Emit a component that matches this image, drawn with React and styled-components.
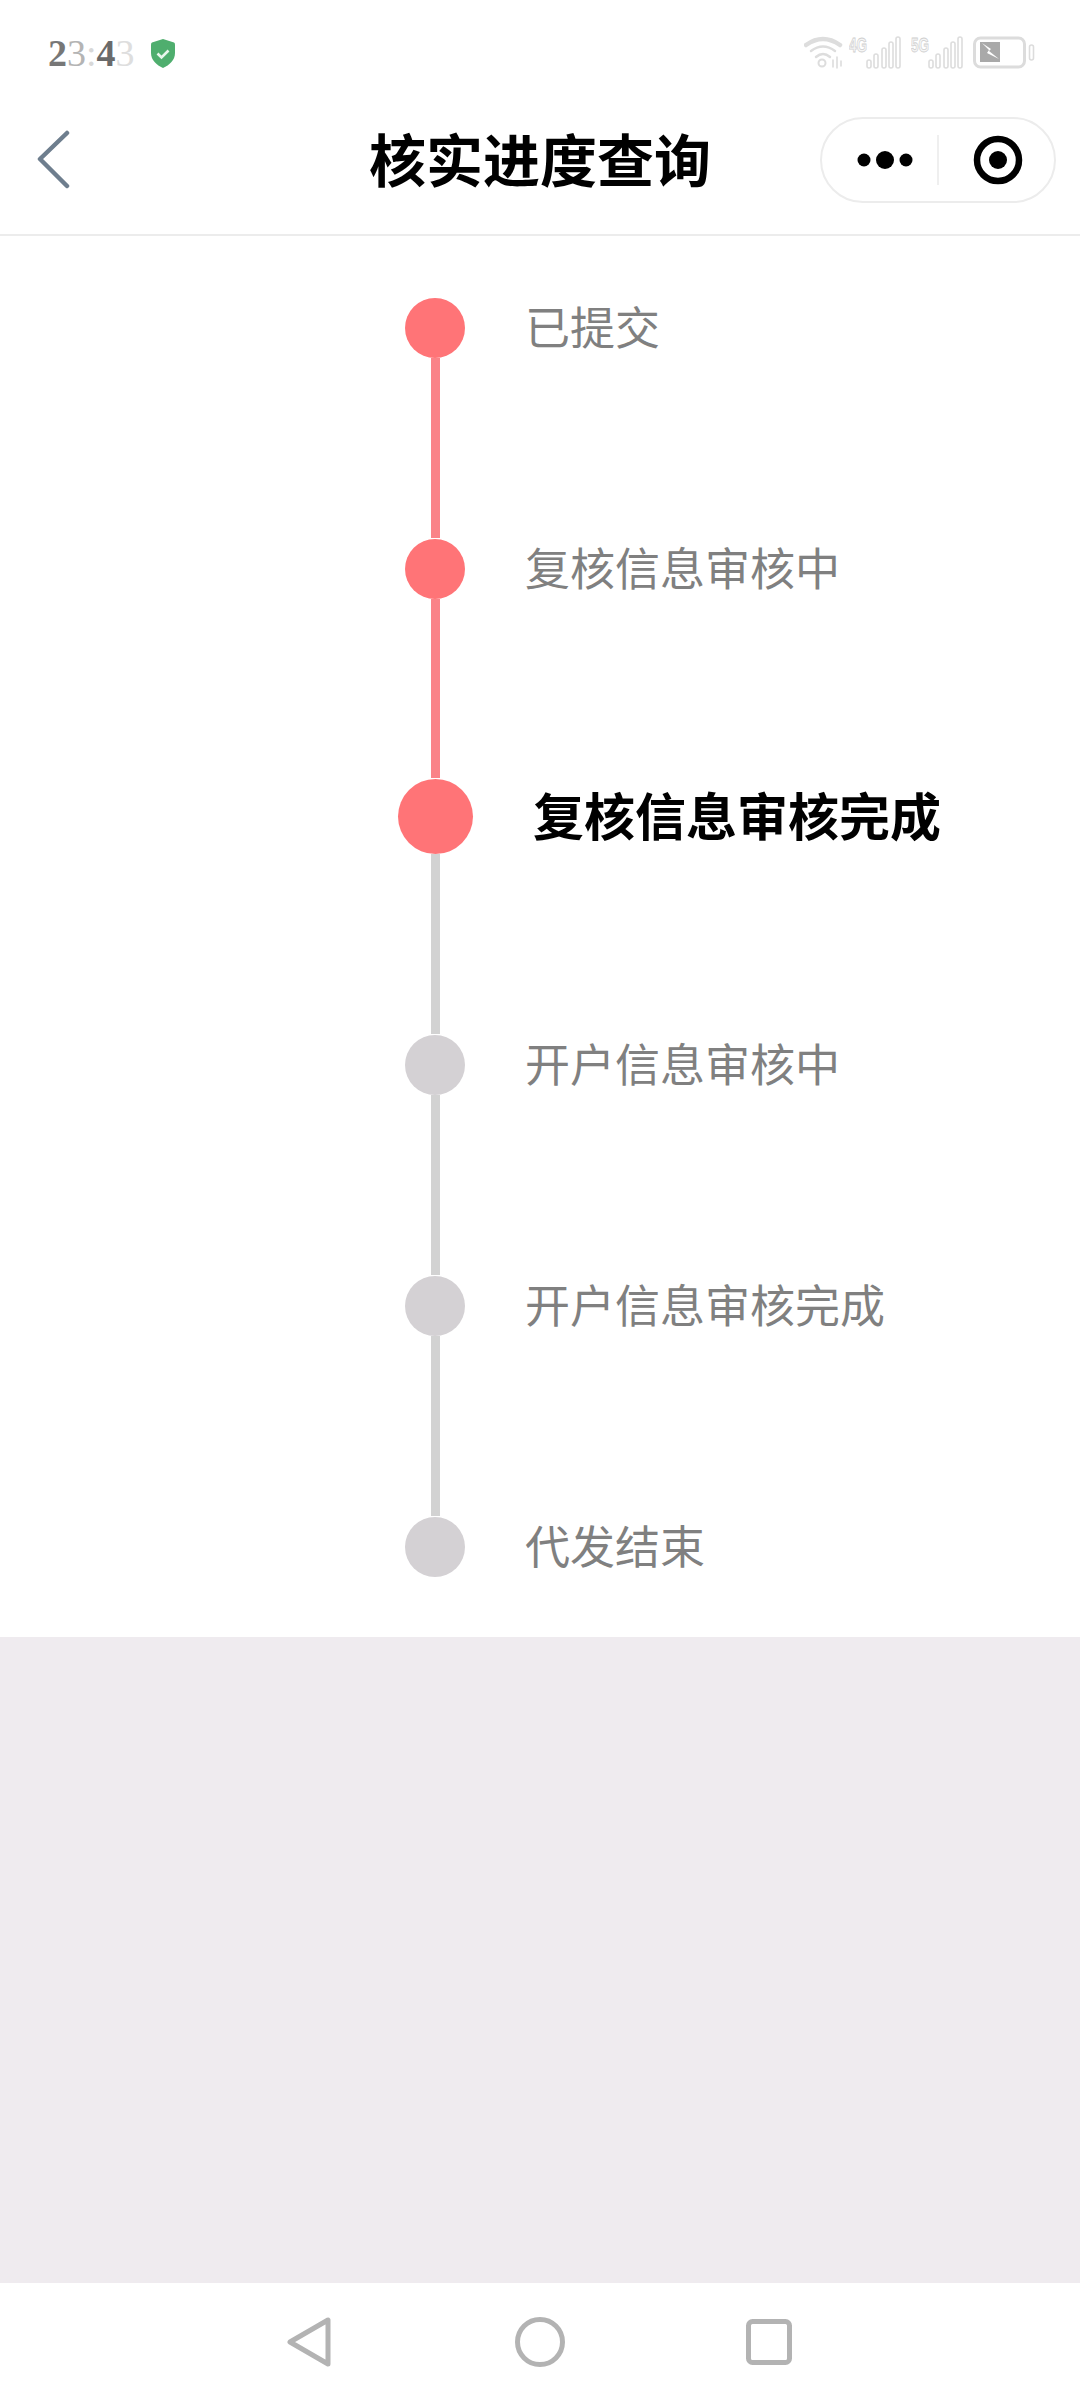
import React from 'react'
import styled, { createGlobalStyle } from 'styled-components'

const steps = [
	{ label: '已提交', state: 'done' },
	{ label: '复核信息审核中', state: 'done' },
	{ label: '复核信息审核完成', state: 'current' },
	{ label: '开户信息审核中', state: 'todo' },
	{ label: '开户信息审核完成', state: 'todo' },
	{ label: '代发结束', state: 'todo' },
]

// gaps between one dot and the next, top to bottom
const lineHeights = [181, 180, 181, 181, 181]

const timeChars = [
	['2', '#777777', 700],
	['3', '#b4b4b4', 400],
	[':', '#d8d8d8', 400],
	['4', '#6a6a6a', 700],
	['3', '#dedede', 400],
]

const signalBars = [
	[18, 24],
	[25, 18],
	[33, 12],
	[40, 6],
	[47, 1],
]

const SignalIcon = ({ name }) => (
	<SignalSvg width='62' height='42' viewBox='0 -8 62 42'>
		<text
			x='0'
			y='16'
			fontSize='20'
			fontWeight='700'
			fontFamily='Liberation Sans, sans-serif'
			fill='#f6f6f6'
			stroke='#cfcfcf'
			strokeWidth='0.8'
			textLength='18'
			lengthAdjust='spacingAndGlyphs'
		>
			{name}
		</text>
		<g fill='none' stroke='#dddddd' strokeWidth='1.6'>
			{signalBars.map(([x, top]) => (
				<rect key={x} x={x} y={top} width='4' height={32 - top} rx='2' />
			))}
		</g>
	</SignalSvg>
)

const App = () => {
	return (
		<>
			<GlobalStyle />
			<Page>
				<StatusBar>
					<StatusLeft>
						<Time>
							{timeChars.map(([char, color, weight], i) => (
								<TimeChar key={i} $color={color} $weight={weight}>
									{char}
								</TimeChar>
							))}
						</Time>
						<svg width='24' height='29' viewBox='0 0 24 29'>
							<path d='M12 0 L23 3.500 Q24 4 24 5.500 V14 C24 21 18.500 26 12 29 C5.500 26 0 21 0 14 V5.500 Q0 4 1 3.500 Z' fill='#4fae6e' />
							<path d='M6.500 14.500 L10.500 18.500 L17.500 11.500' fill='none' stroke='#e8f6ec' strokeWidth='2.600' />
						</svg>
					</StatusLeft>
					<StatusRight>
						<StatusIcon width='45' height='34' viewBox='0 0 45 34'>
							<g fill='none' stroke='#dddddd' strokeLinecap='round'>
								<path d='M2 9 Q19 -3 36 9' strokeWidth='4.500' />
								<path d='M7 15 Q19 6 31 15' strokeWidth='2.500' />
								<path d='M12 21 Q19 15 26 21' strokeWidth='2.500' />
								<circle cx='18' cy='27' r='3.500' strokeWidth='2' />
								<path d='M29 24 V31 M33 21 V32 M37 25 V30' strokeWidth='1.600' />
							</g>
						</StatusIcon>
						<SignalIcon name='4G' />
						<SignalIcon name='5G' />
						<StatusIcon width='62' height='34' viewBox='0 0 62 34'>
							<rect x='1.500' y='2' width='50' height='29' rx='6' fill='none' stroke='#dcdcdc' strokeWidth='3' />
							<rect x='7' y='6' width='20' height='20' fill='#a9a9a9' />
							<path d='M9 7 L18 13 L16 15 L26 23 L14 17 L16 14 Z' fill='#ffffff' />
							<rect x='56.500' y='9' width='4' height='15' rx='2' fill='none' stroke='#dcdcdc' strokeWidth='1.600' />
						</StatusIcon>
					</StatusRight>
				</StatusBar>

				<Header>
					<BackButton>
						<svg width='36' height='60' viewBox='0 0 36 60'>
							<path d='M30 3 L3 29 L30 56' fill='none' stroke='#6e7e8e' strokeWidth='4.500' strokeLinecap='round' strokeLinejoin='round' />
						</svg>
					</BackButton>
					<Title>核实进度查询</Title>
					<Capsule>
						<CapsulePart $inset={10}>
							<svg width='56' height='20' viewBox='0 0 56 20'>
								<circle cx='7' cy='10' r='6.500' fill='#000' />
								<circle cx='28' cy='10' r='9' fill='#000' />
								<circle cx='49' cy='10' r='6.500' fill='#000' />
							</svg>
						</CapsulePart>
						<CapsuleDivider />
						<CapsulePart $inset={3}>
							<svg width='50' height='50' viewBox='0 0 50 50'>
								<circle cx='25' cy='25' r='21' fill='none' stroke='#000' strokeWidth='6.500' />
								<circle cx='25' cy='25' r='9' fill='#000' />
							</svg>
						</CapsulePart>
					</Capsule>
				</Header>

				<Timeline>
					{steps.map((step, i) => (
						<Step key={step.label}>
							<Rail>
								<Dot $state={step.state} />
								{i < steps.length - 1 && (
									<Line $state={steps[i + 1].state} style={{ height: lineHeights[i] - 1 }} />
								)}
							</Rail>
							<Label $state={step.state}>{step.label}</Label>
						</Step>
					))}
				</Timeline>

				<Filler />

				<NavBar>
					<svg width='46' height='50' viewBox='0 0 46 50'>
						<path d='M41 3 V47 L3 25 Z' fill='none' stroke='#b3b3b3' strokeWidth='5' strokeLinejoin='round' />
					</svg>
					<svg width='50' height='50' viewBox='0 0 50 50'>
						<circle cx='25' cy='25' r='22.500' fill='none' stroke='#b3b3b3' strokeWidth='5' />
					</svg>
					<svg width='46' height='46' viewBox='0 0 46 46'>
						<rect x='2.500' y='2.500' width='41' height='41' rx='4' fill='none' stroke='#b3b3b3' strokeWidth='5' />
					</svg>
				</NavBar>
			</Page>
		</>
	)
}

const GlobalStyle = createGlobalStyle`
	* {
		box-sizing: border-box;
	}
	body {
		margin: 0;
		background: #fff;
		font-family: 'Noto Sans CJK SC', 'Liberation Sans', sans-serif;
	}
`

const Page = styled.div`
	width: 1080px;
	height: 2400px;
	display: flex;
	flex-direction: column;
	background: #fff;
`

const StatusBar = styled.div`
	height: 86px;
	padding: 36px 45px 0 48px;
	display: flex;
	justify-content: space-between;
	align-items: flex-start;
`

const StatusLeft = styled.div`
	display: flex;
	align-items: center;
	gap: 14px;
	padding-top: 2px;
`

const Time = styled.div`
	width: 89px;
	font-family: 'Liberation Serif', serif;
	font-size: 38px;
	line-height: 30px;
`

const TimeChar = styled.span`
	color: ${(props) => props.$color};
	font-weight: ${(props) => props.$weight};
`

const StatusRight = styled.div`
	display: flex;
	align-items: flex-start;
`

const StatusIcon = styled.svg`
	display: block;
`

// taller than the other icons so the network label has room above the bars
const SignalSvg = styled.svg`
	display: block;
	margin-top: -8px;
`

const Header = styled.div`
	height: 150px;
	border-bottom: 2px solid #ececec;
	display: grid;
	grid-template-columns: 1fr auto 1fr;
	align-items: center;
`

const BackButton = styled.div`
	padding-left: 37px;
	display: flex;
	align-items: center;
`

const Title = styled.h1`
	margin: 0 0 5px;
	font-size: 57px;
	font-weight: 700;
	line-height: 1;
	color: #000;
`

const Capsule = styled.div`
	justify-self: end;
	margin-right: 24px;
	width: 236px;
	height: 86px;
	border: 2px solid #ececec;
	border-radius: 43px;
	display: flex;
	align-items: center;
`

const CapsulePart = styled.div`
	width: 115px;
	padding-left: ${(props) => props.$inset}px;
	display: flex;
	justify-content: center;
	align-items: center;
`

const CapsuleDivider = styled.div`
	width: 2px;
	height: 50px;
	background: #efefef;
`

const Timeline = styled.div`
	height: 1401px;
	padding: 62px 0 0 397px;
	display: flex;
	flex-direction: column;
`

const Step = styled.div`
	display: flex;
	align-items: flex-start;
`

const Rail = styled.div`
	width: 76px;
	display: flex;
	flex-direction: column;
	align-items: center;
`

const dotColor = (state) => (state === 'todo' ? '#d4d1d4' : '#ff7477')

const Dot = styled.div`
	width: ${(props) => (props.$state === 'current' ? 75 : 60)}px;
	height: ${(props) => (props.$state === 'current' ? 75 : 60)}px;
	border-radius: 50%;
	background: ${(props) => dotColor(props.$state)};
`

const Line = styled.div`
	width: 9px;
	margin-bottom: 1px;
	background: ${(props) => (props.$state === 'todo' ? '#d2d2d2' : '#fa8388')};
`

const Label = styled.div`
	margin: ${(props) => (props.$state === 'current' ? '-2px 0 0 60px' : '-2px 0 0 52px')};
	font-size: ${(props) => (props.$state === 'current' ? 51 : 45)}px;
	font-weight: ${(props) => (props.$state === 'current' ? 700 : 400)};
	line-height: ${(props) => (props.$state === 'current' ? 75 : 60)}px;
	color: ${(props) => (props.$state === 'current' ? '#000' : '#808080')};
	white-space: nowrap;
`

const Filler = styled.div`
	flex: 1;
	background: #efebef;
`

const NavBar = styled.div`
	height: 117px;
	padding: 34px 288px 33px 287px;
	display: flex;
	justify-content: space-between;
	align-items: center;
`

export default App
